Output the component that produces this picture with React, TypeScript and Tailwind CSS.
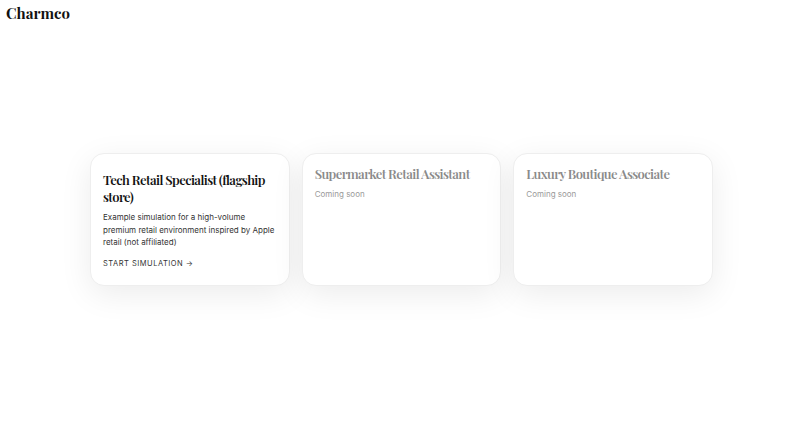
import React from "react";

const serif = { fontFamily: '"Playfair Display", "Liberation Serif", "DejaVu Serif", serif' };

export default function App() {
  return (
    <div className="min-h-[445px] w-full bg-white" style={{ fontFamily: 'Inter, "Liberation Sans", sans-serif' }}>
      <header className="px-[6px] pt-[3px]">
        <div className="text-[15px] font-bold leading-[20px] text-[#111]" style={serif}>Charmco</div>
      </header>
      <main className="flex justify-center pt-[130px] pr-[3px]">
        <div className="grid grid-cols-3 gap-[12px] w-[623px]">
          <div className="h-[133px] rounded-[14px] border border-[#eeeeee] bg-white px-[12px] pt-[17px] shadow-[0_8px_32px_rgba(0,0,0,0.08)]">
            <h2 className="text-[13px] font-semibold leading-[17px] tracking-[-0.6px] text-[#111]" style={serif}>Tech Retail Specialist (flagship store)</h2>
            <p className="mt-[6px] text-[8px] leading-[12.5px] text-[#333]">Example simulation for a high-volume premium retail environment inspired by Apple retail (not affiliated)</p>
            <div className="mt-[9px] text-[7.5px] leading-[12px] tracking-[0.5px] text-[#333]">START SIMULATION →</div>
          </div>
          <div className="h-[133px] rounded-[14px] border border-[#eeeeee] bg-white px-[12px] pt-[11px] shadow-[0_8px_32px_rgba(0,0,0,0.08)]">
            <h2 className="text-[13px] font-semibold leading-[17px] tracking-[-0.6px] text-[#8a8a8a]" style={serif}>Supermarket Retail Assistant</h2>
            <p className="mt-[6px] text-[8px] leading-[12px] text-[#999]">Coming soon</p>
          </div>
          <div className="h-[133px] rounded-[14px] border border-[#eeeeee] bg-white px-[12px] pt-[11px] shadow-[0_8px_32px_rgba(0,0,0,0.08)]">
            <h2 className="text-[13px] font-semibold leading-[17px] tracking-[-0.6px] text-[#8a8a8a]" style={serif}>Luxury Boutique Associate</h2>
            <p className="mt-[6px] text-[8px] leading-[12px] text-[#999]">Coming soon</p>
          </div>
        </div>
      </main>
    </div>
  );
}
